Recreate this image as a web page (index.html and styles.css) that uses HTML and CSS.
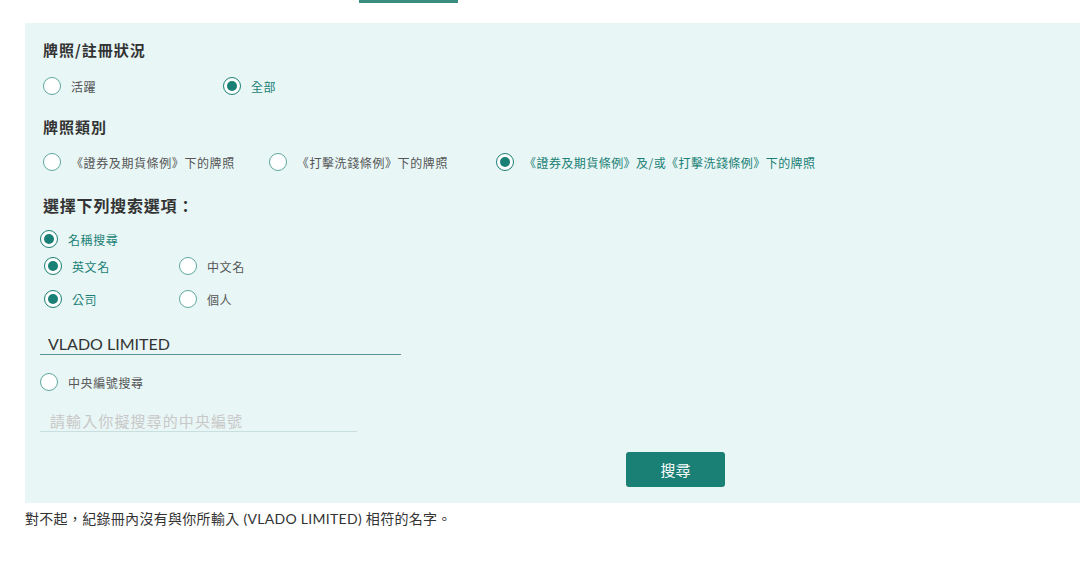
FILE: index.html
```html
<!DOCTYPE html>
<html lang="zh-Hant">
<head>
<meta charset="utf-8">
<link rel="stylesheet" href="styles.css">
</head>
<body>
<div class="topbar"><span class="tab-line"></span></div>
<div class="panel">
  <div class="heading">牌照/註冊狀況</div>
  <div class="row r1">
    <label class="opt w180"><span class="radio"></span><span class="lbl">活躍</span></label>
    <label class="opt on"><span class="radio"></span><span class="lbl">全部</span></label>
  </div>
  <div class="heading h2">牌照類別</div>
  <div class="row r2">
    <label class="opt m34"><span class="radio"></span><span class="lbl">《證券及期貨條例》下的牌照</span></label>
    <label class="opt m48"><span class="radio"></span><span class="lbl">《打擊洗錢條例》下的牌照</span></label>
    <label class="opt on tight"><span class="radio"></span><span class="lbl">《證券及期貨條例》及/或《打擊洗錢條例》下的牌照</span></label>
  </div>
  <div class="heading big">選擇下列搜索選項：</div>
  <div class="row r3 out">
    <label class="opt on"><span class="radio"></span><span class="lbl">名稱搜尋</span></label>
  </div>
  <div class="row r4">
    <label class="opt w135 on"><span class="radio"></span><span class="lbl">英文名</span></label>
    <label class="opt"><span class="radio"></span><span class="lbl">中文名</span></label>
  </div>
  <div class="row r5">
    <label class="opt w135 on"><span class="radio"></span><span class="lbl">公司</span></label>
    <label class="opt"><span class="radio"></span><span class="lbl">個人</span></label>
  </div>
  <div class="field name-field">VLADO LIMITED</div>
  <div class="row r6 out">
    <label class="opt"><span class="radio"></span><span class="lbl">中央編號搜尋</span></label>
  </div>
  <div class="field ce-field">請輸入你擬搜尋的中央編號</div>
  <div class="btn-row"><button class="btn">搜尋</button></div>
</div>
<p class="msg">對不起，紀錄冊內沒有與你所輸入 (VLADO LIMITED) 相符的名字。</p>
</body>
</html>
```
FILE: styles.css
```css
html, body {
  margin: 0;
  padding: 0;
  background: #ffffff;
  font-family: "Noto Sans CJK TC", "Noto Sans", sans-serif;
  color: #333333;
}
.topbar {
  height: 23px;
}
.tab-line {
  display: block;
  margin-left: 359px;
  width: 99px;
  height: 3px;
  background: #3a8d80;
}
.panel {
  margin-left: 25px;
  background: #e8f6f6;
  padding: 15px 0 16px 18px;
}
.heading {
  font-size: 15px;
  font-weight: 700;
  line-height: 24px;
  height: 24px;
  color: #333;
  letter-spacing: 1px;
}
.heading.h2 { margin-top: 17px; }
.heading.big {
  font-size: 16px;
  margin-top: 19px;
  letter-spacing: 0.8px;
}
.row {
  display: flex;
  align-items: center;
  height: 24px;
}
.r1 { margin-top: 12px; }
.r2 { margin-top: 11px; }
.r3 { margin-top: 10px; }
.r4 { margin-top: 3px; padding-left: 1px; }
.r5 { margin-top: 9px; padding-left: 1px; }
.r6 { margin-top: 15px; }
.out { margin-left: -3px; }
.opt {
  display: flex;
  align-items: center;
  font-size: 12px;
  color: #555;
  letter-spacing: 0.6px;
}
.opt.tight { letter-spacing: 0.45px; }
.w180 { width: 180px; }
.w135 { width: 135px; }
.m34 { margin-right: 34px; }
.m48 { margin-right: 48px; }
.radio {
  box-sizing: border-box;
  width: 18px;
  height: 18px;
  border-radius: 50%;
  border: 1.5px solid #5fa8a0;
  background: #ffffff;
  margin-right: 10px;
  flex: none;
  position: relative;
}
.opt.on .lbl { color: #1a7f74; }
.opt.on .radio {
  border-color: #1a7f74;
}
.opt.on .radio::after {
  content: "";
  position: absolute;
  left: 2.5px;
  top: 2.5px;
  width: 10px;
  height: 10px;
  border-radius: 50%;
  background: #1a7f74;
}
.field {
  box-sizing: border-box;
  margin-left: -3px;
  height: 21px;
  line-height: 20px;
  padding-left: 8px;
}
.name-field {
  margin-top: 23px;
  width: 361px;
  border-bottom: 1px solid #5a9494;
  font-family: Lato, "Noto Sans CJK TC", sans-serif;
  font-size: 16px;
  color: #333;
}
.ce-field {
  margin-top: 17px;
  width: 317px;
  padding-left: 10px;
  border-bottom: 1px solid #c9dede;
  font-size: 15px;
  color: #c8c8c8;
  letter-spacing: 1.1px;
}
.btn-row {
  margin-top: 20px;
  display: flex;
}
.btn {
  margin-left: 583px;
  width: 99px;
  height: 35px;
  border: none;
  border-radius: 3px;
  background: #1a7f74;
  color: #ffffff;
  font-family: "Noto Sans CJK TC", sans-serif;
  font-size: 15px;
  padding: 0;
}
.msg {
  margin: 6px 0 0 25px;
  font-size: 14px;
  line-height: 20px;
  color: #333;
  letter-spacing: 0.3px;
  font-family: Lato, "Noto Sans CJK TC", sans-serif;
}
```
